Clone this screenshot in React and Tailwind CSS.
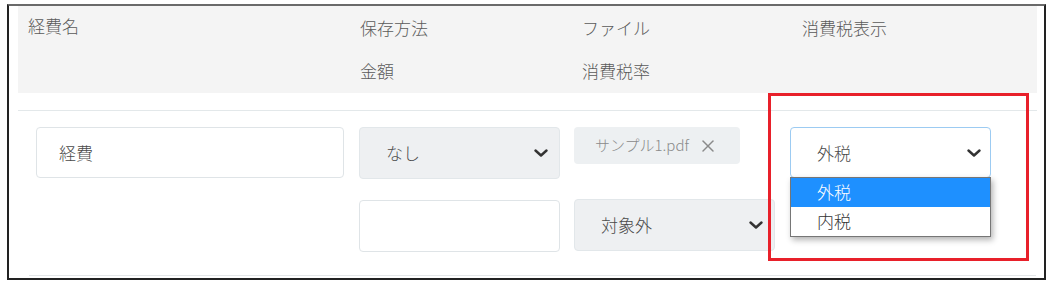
import { X } from 'lucide-react';

const font = { fontFamily: '"Noto Sans CJK JP", "Noto Sans", sans-serif' };

function Chevron() {
    return (
        <svg width="14" height="8" viewBox="0 0 14 8" className="shrink-0">
            <path d="M1.5 1.5 L7 6.5 L12.5 1.5" fill="none" stroke="#333" strokeWidth="2.4" strokeLinecap="round" strokeLinejoin="round" />
        </svg>
    );
}

function SelectBox({ value, className = '' }) {
    return (
        <div className={`flex h-[52px] items-center justify-between rounded-[4px] border border-[#e2e7ea] bg-[#eef0f2] pl-[26px] pr-[11px] text-[17px] text-[#4a4a4a] ${className}`}>
            <span>{value}</span>
            <Chevron />
        </div>
    );
}

export default function App() {
    return (
        <div className="bg-white w-[1054px] h-[289px] pt-[4px] pl-[7px] font-light" style={font}>
            <div className="relative w-[1039px] h-[276px] border-2 border-[#222] border-t-[#6a6a6a]">
                {/* header */}
                <div className="ml-[9px] mr-[7px] h-[87px] bg-[#f4f4f4] pt-[10px] text-[17px] leading-[24px] text-[#5a5a5a]">
                    <div className="flex">
                        <div className="w-[342px] pl-[10px] -mt-[2px]">経費名</div>
                        <div className="w-[222px]">保存方法</div>
                        <div className="w-[220px]">ファイル</div>
                        <div>消費税表示</div>
                    </div>
                    <div className="flex mt-[19px]">
                        <div className="w-[342px]" />
                        <div className="w-[222px]">金額</div>
                        <div className="w-[220px]">消費税率</div>
                    </div>
                </div>

                {/* body */}
                <div className="mt-[17px] ml-[9px] mr-[7px] border-t border-[#e3e8ea] pt-[16px]">
                    <div className="flex gap-[15px] pl-[18px]">
                        <div className="w-[308px] flex h-[51px] items-center rounded-[4px] border border-[#dfe4e7] bg-white pl-[22px] text-[17px] text-[#4a4a4a]">
                            経費
                        </div>
                        <div className="w-[201px] flex flex-col gap-[21px]">
                            <SelectBox value="なし" className="h-[51px]" />
                            <div className="h-[52px] rounded-[4px] border border-[#dfe4e7] bg-white" />
                        </div>
                        <div className="w-[201px] -ml-px flex flex-col gap-[35px]">
                            <div className="flex h-[37px] w-[166px] items-center gap-[9px] rounded-[4px] bg-[#edf0f2] pl-[21px] text-[15px] text-[#8a8a8a]">
                                <span>サンプル1.pdf</span>
                                <X size={20} strokeWidth={1.8} color="#8a8a8a" />
                            </div>
                            <SelectBox value="対象外" />
                        </div>
                        <div className="relative w-[201px]">
                            <div className="flex h-[51px] items-center justify-between rounded-[4px] border border-[#9ccbf2] bg-white pl-[26px] pr-[9px] text-[17px] text-[#4a4a4a]">
                                <span>外税</span>
                                <Chevron />
                            </div>
                            <div className="absolute left-0 top-[50px] z-10 w-[201px] border border-[#767676] bg-white text-[17px] leading-[24px] shadow-[2px_3px_6px_rgba(0,0,0,0.3)]">
                                <div className="h-[29px] bg-[#1e90ff] pl-[26px] pt-[2px] text-white">外税</div>
                                <div className="h-[29px] pl-[26px] pt-[2px] text-[#333]">内税</div>
                            </div>
                        </div>
                    </div>
                    <div className="mt-[23px] ml-[11px] mr-[1px] border-t border-[#e3e6e8]" />
                </div>

                {/* annotation box */}
                <div className="absolute left-[759px] top-[87px] w-[261px] h-[168px] border-[3px] border-[#e8202a]" />
            </div>
        </div>
    );
}
